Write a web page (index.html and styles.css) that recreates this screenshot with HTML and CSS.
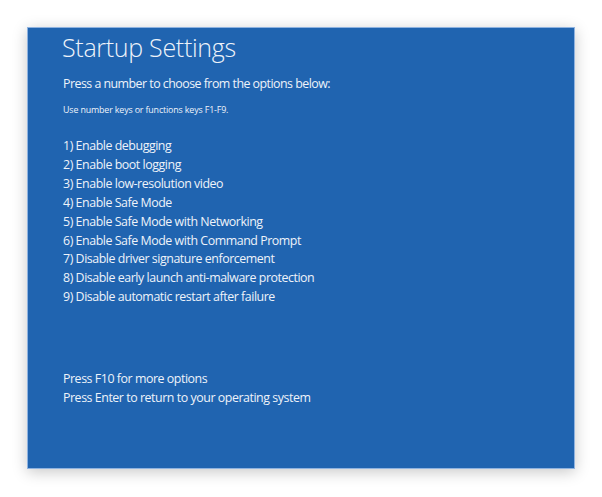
FILE: index.html
```html
<!DOCTYPE html>
<html lang="en">
<head>
<meta charset="utf-8">
<title>Startup Settings</title>
<link rel="stylesheet" href="styles.css">
</head>
<body>
<main class="screen">
  <h1 class="title">Startup Settings</h1>
  <p class="lead">Press a number to choose from the options below:</p>
  <p class="hint">Use number keys or functions keys F1-F9.</p>
  <ol class="options">
    <li>1) Enable debugging</li>
    <li>2) Enable boot logging</li>
    <li>3) Enable low-resolution video</li>
    <li>4) Enable Safe Mode</li>
    <li>5) Enable Safe Mode with Networking</li>
    <li>6) Enable Safe Mode with Command Prompt</li>
    <li>7) Disable driver signature enforcement</li>
    <li>8) Disable early launch anti-malware protection</li>
    <li>9) Disable automatic restart after failure</li>
  </ol>
  <div class="footer">
    <p>Press F10 for more options</p>
    <p>Press Enter to return to your operating system</p>
  </div>
</main>
</body>
</html>
```
FILE: styles.css
```css
html, body {
  margin: 0;
  padding: 0;
  background: #ffffff;
}
body {
  width: 602px;
  height: 497px;
  overflow: hidden;
  font-family: "Open Sans", "Noto Sans", sans-serif;
}
.screen {
  box-sizing: border-box;
  margin: 27px 0 0 27px;
  width: 548px;
  height: 442px;
  background: #2064b0;
  border: 1px solid #8fb3e0;
  box-shadow: 0 3px 14px rgba(0, 0, 0, 0.22);
  color: #eef3fa;
  padding: 0 0 0 34px;
  display: flex;
  flex-direction: column;
}
.title {
  margin: 2px 0 0 0;
  font-size: 25px;
  font-weight: 300;
  line-height: 34px;
  letter-spacing: -0.3px;
}
.lead {
  margin: 11px 0 0 1px;
  font-size: 12.4px;
  line-height: 18px;
  letter-spacing: -0.52px;
}
.hint {
  margin: 11px 0 0 1px;
  font-size: 8.9px;
  line-height: 12px;
  letter-spacing: -0.15px;
}
.options {
  list-style: none;
  margin: 21px 0 0 1px;
  padding: 0;
  font-size: 12.4px;
  line-height: 18.9px;
  letter-spacing: -0.45px;
}
.footer {
  margin: 63px 0 0 1px;
  font-size: 12.4px;
  line-height: 18.5px;
  letter-spacing: -0.45px;
}
.footer p {
  margin: 0;
}
```
